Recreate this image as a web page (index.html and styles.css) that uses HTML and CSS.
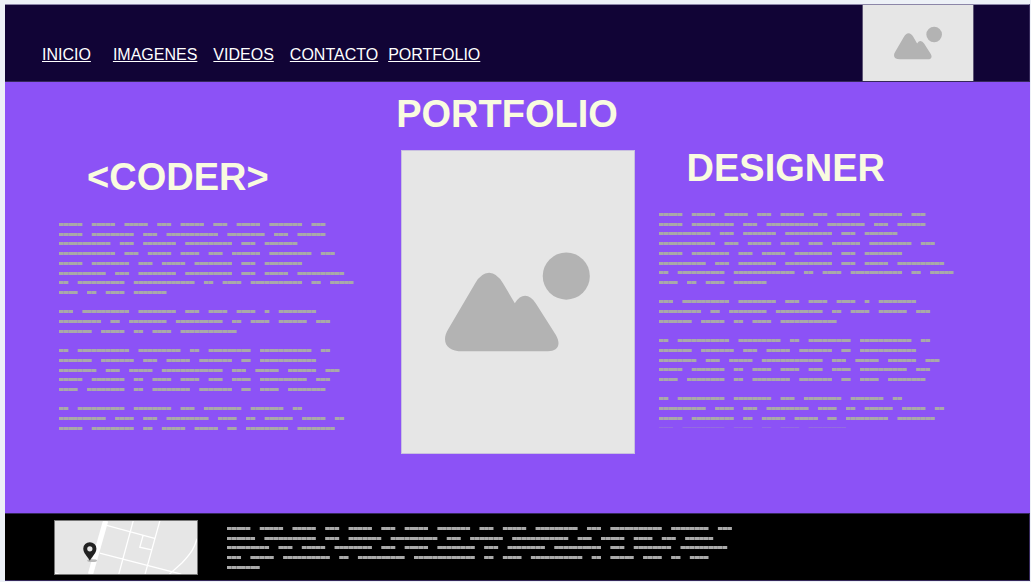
FILE: index.html
```
<!DOCTYPE html>
<html lang="es">
<head>
<meta charset="utf-8">
<meta name="viewport" content="width=device-width, initial-scale=1">
<title>Portfolio</title>
<link rel="stylesheet" href="styles.css">
</head>
<body>
<svg class="defs" aria-hidden="true">
  <symbol id="picture" viewBox="0 0 434 299">
    <circle cx="363" cy="72" r="70.500"/>
    <path d="M0 260C0 249 4 240 10 230L90 94Q108 62 132 62Q155 62 174 94L209 153Q223 131 240 131Q257 131 272 154L331 247C350 279 336 297 308 297H53C18 297 0 283 0 260Z"/>
  </symbol>
</svg>
<header class="header">
  <nav class="nav">
    <a class="nav-first" href="#">INICIO</a>
    <a href="#">IMAGENES</a>
    <a href="#">VIDEOS</a>
    <a href="#">CONTACTO</a>
    <a class="nav-last" href="#">PORTFOLIO</a>
  </nav>
  <div class="picture logo"><svg role="img" aria-label="Logo"><use href="#picture"/></svg></div>
</header>
<main class="main">
  <h1 class="title">PORTFOLIO</h1>
  <div class="columns">
    <section class="column coder">
      <h2 class="title">&lt;CODER&gt;</h2>
      <svg class="lines" data-text="body" role="img" aria-label="Texto coder"></svg>
    </section>
    <div class="picture photo"><svg role="img" aria-label="Foto"><use href="#picture"/></svg></div>
    <section class="column designer">
      <h2 class="title">DESIGNER</h2>
      <svg class="lines" data-text="body" data-cut="yes" role="img" aria-label="Texto designer"></svg>
    </section>
  </div>
</main>
<footer class="footer">
  <svg class="map" viewBox="0 0 432 162" preserveAspectRatio="xMidYMid slice" role="img" aria-label="Mapa">
    <g fill="none" stroke="#fff" stroke-width="4">
      <path d="M154 0L108 162" stroke-width="16"/>
      <path d="M157 14L303 53M136 98L384 162M238 0L194 162M319 0L274 162M268 44L258 80L294 88M432 54C424 82 416 96 386 128L348 162M0 158L12 163"/>
    </g>
    <ellipse cx="113" cy="121" rx="15" ry="4" fill="#b9b9b9"/>
    <path fill="#222" fill-rule="evenodd" d="M106 121C98 107 86 98 86 84A20 19 0 0 1 126 84C126 98 114 107 106 121ZM106 77A8 8 0 1 0 106 93A8 8 0 1 0 106 77Z"/>
  </svg>
  <svg class="lines" data-text="footer" role="img" aria-label="Texto del pie"></svg>
</footer>
<script src="lines.js"></script>
</body>
</html>
```
FILE: styles.css
```
* { box-sizing: border-box; }
body {
  margin: 0;
  padding: 4px 1px 1px 5px;
  min-height: 100vh;
  display: flex;
  flex-direction: column;
  background: #edf1f7;
  font-family: "Liberation Sans", Arial, sans-serif;
}
.defs { display: none; }
.header {
  display: flex;
  align-items: stretch;
  justify-content: space-between;
  min-height: 78px;
  padding-left: 37px;
  padding-right: 55px;
  background: #110436;
  border: 1px solid #35285a;
  border-top-color: #8c86a8;
  border-left: 0;
}
.nav {
  display: flex;
  gap: 16px;
  padding-top: 40px;
  font-size: 16px;
  line-height: 20px;
}
.nav a { color: #fff; }
.nav-first { margin-right: 6px; }
.nav-last { margin-left: -6px; }
.picture {
  display: flex;
  align-items: center;
  justify-content: center;
  background: #e6e6e6;
  fill: #b3b3b3;
}
.logo { width: 112px; border: 1px solid #5d5575; border-width: 0 1px; }
.logo svg { width: 48px; height: 34px; }
.photo { height: 304px; border: 1px solid #c9c0e0; }
.photo svg { width: 145px; height: 100px; }
.main {
  flex: 1;
  background: #8c52f6;
}
.title {
  margin: 0;
  font-size: 38px;
  line-height: 44px;
  font-weight: bold;
  color: #f9fbe0;
}
.main > .title {
  padding: 10px 21px 14px 0;
  text-align: center;
}
.columns {
  display: grid;
  grid-template-columns: 1fr 234px 1fr;
  align-items: start;
}
.coder { padding: 5px 0 0 54px; }
.coder .title { padding-left: 28px; }
.designer { padding-left: 24px; }
.designer .title { padding-left: 28px; margin-top: -4px; }
.lines { display: block; fill: #a9a9a9; }
.column .lines { margin-top: 24px; }
.designer .lines { margin-top: 23px; }
.footer {
  display: flex;
  align-items: flex-start;
  gap: 29px;
  min-height: 68px;
  padding: 6px 20px 5px 49px;
  background: #000;
  border: 1px solid #35285a;
  border-left: 0;
}
.map {
  flex: none;
  width: 144px;
  height: 55px;
  background: #e6e6e6;
  border: 1px solid #777;
}
.footer .lines { margin-top: 7px; fill: #aaa; }
```
FILE: lines.js
```
// Word lengths, in characters, of each line of placeholder text.
const texts = {
  body: [
    "5 5 5 3 5 3 5 7 3", "5 9 3 11 8 3 6", "11 3 7 10 3 7",
    "12 3 5 4 3 6 9 3", "5 8 3 5 8 3 8", "10 3 8 10 3 5 10",
    "2 10 13 2 4 11 2 5", "4 2 4 7", "",
    "3 10 8 3 4 4 1 8", "9 2 8 10 2 4 6 3", "7 5 2 4 12", "",
    "2 11 9 2 9 11 2", "7 7 3 5 7 2 12", "8 3 5 13 3 5 6 3",
    "5 7 2 4 4 3 4 10 3", "4 8 2 8 7 2 4 8", "",
    "2 10 8 3 8 7 2", "10 4 3 9 4 2 6 5 2", "5 9 2 5 5 2 9 8"
  ],
  footer: [
    "5 5 5 3 5 3 5 7 3 5 9 3 11 8 3", "6 11 3 7 10 3 7 12 3 5 4 3 6",
    "9 3 5 8 3 5 8 3 8 10 3 8 10", "3 5 10 2 10 13 2 4 11 2 5 4 2 4", "7"
  ]
};
const unit = 4.675;
const pitch = 9.71;
const ns = "http://www.w3.org/2000/svg";

function drawLine(svg, line, y, height, opacity) {
  let at = 0;
  for (const word of line.split(" ").map(Number)) {
    // One block per character, so the joints between them stay visible.
    for (let i = 0; i < word; i++) {
      const block = document.createElementNS(ns, "rect");
      block.setAttribute("x", (at + i) * unit);
      block.setAttribute("y", y);
      block.setAttribute("width", unit);
      block.setAttribute("height", height);
      block.setAttribute("opacity", opacity);
      svg.append(block);
    }
    at += word + 2;
  }
  return (at - 2) * unit;
}

for (const svg of document.querySelectorAll(".lines")) {
  const lines = texts[svg.dataset.text];
  let width = 0;
  lines.forEach((line, i) => {
    if (line) width = Math.max(width, drawLine(svg, line, Math.round(i * pitch), 3, 1));
  });
  let height = Math.round((lines.length - 1) * pitch) + 3;
  if (svg.dataset.cut) {
    drawLine(svg, "3 9 4 2 4 8", height + 7, 1, 0.3);
    height += 8;
  }
  svg.setAttribute("width", Math.ceil(width));
  svg.setAttribute("height", height);
}
```
